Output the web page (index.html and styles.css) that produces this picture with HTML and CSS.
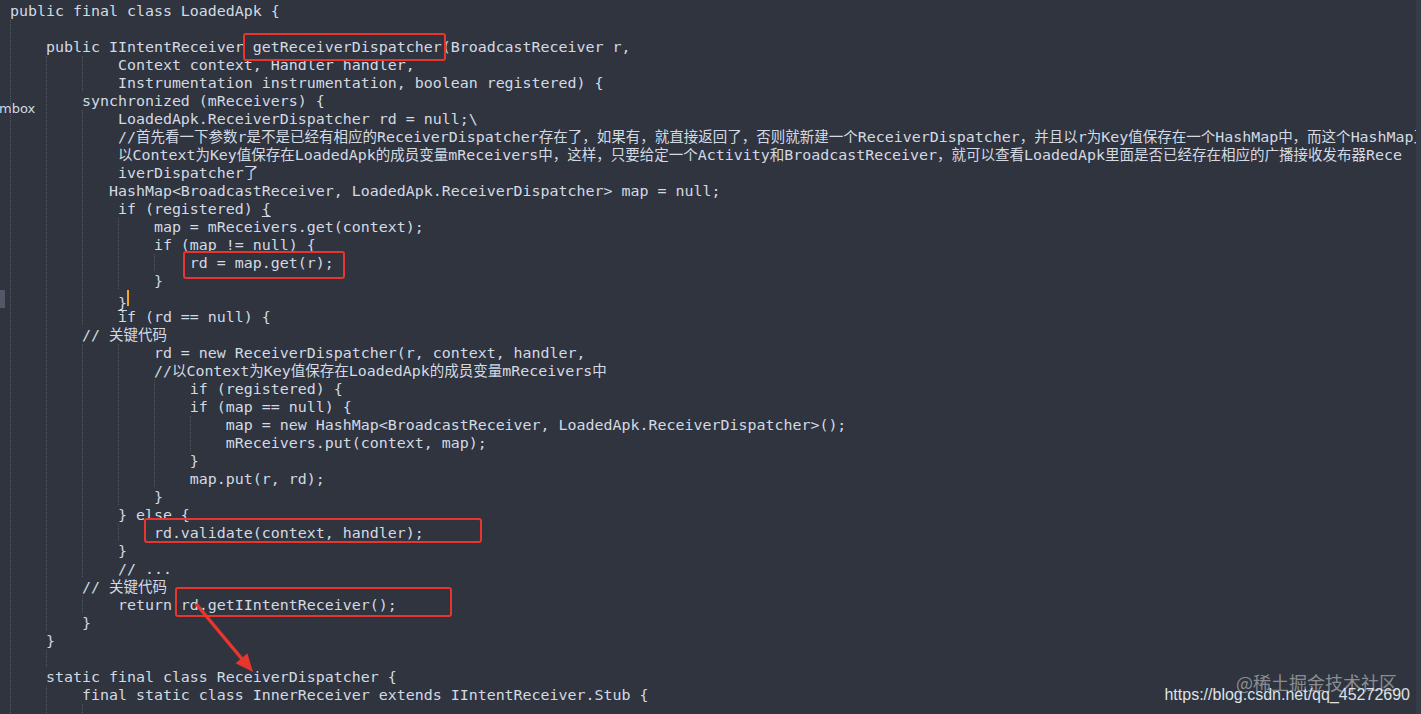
FILE: index.html
```html
<!DOCTYPE html>
<html lang="zh-CN">
<head>
<meta charset="utf-8">
<title>LoadedApk</title>
<link rel="stylesheet" href="styles.css">
</head>
<body>
<div class="editor">
  <div class="code">
<div class="l">public final class LoadedApk {</div>
<div class="l g1"></div>
<div class="l g1">    public IIntentReceiver getReceiverDispatcher(BroadcastReceiver r,</div>
<div class="l g3">            Context context, Handler handler,</div>
<div class="l g3">            Instrumentation instrumentation, boolean registered) {</div>
<div class="l g2">        synchronized (mReceivers) {</div>
<div class="l g3">            LoadedApk.ReceiverDispatcher rd = null;\</div>
<div class="l g3">            //<span class="zh">首先看一下参数</span>r<span class="zh">是不是已经有相应的</span>ReceiverDispatcher<span class="zh">存在了，如果有，就直接返回了，否则就新建一个</span>ReceiverDispatcher<span class="zh">，并且以</span>r<span class="zh">为</span>Key<span class="zh">值保存在一个</span>HashMap<span class="zh">中，而这个</span>HashMap<span class="zh">又</span></div>
<div class="l g3">            <span class="zh">以</span>Context<span class="zh">为</span>Key<span class="zh">值保存在</span>LoadedApk<span class="zh">的成员变量</span>mReceivers<span class="zh">中，这样，只要给定一个</span>Activity<span class="zh">和</span>BroadcastReceiver<span class="zh">，就可以查看</span>LoadedApk<span class="zh">里面是否已经存在相应的广播接收发布器</span>Rece</div>
<div class="l g3">            iverDispatcher<span class="zh">了</span></div>
<div class="l g3">           HashMap&lt;BroadcastReceiver, LoadedApk.ReceiverDispatcher&gt; map = null;</div>
<div class="l g3">            if (registered) <span class="match">{</span></div>
<div class="l g4">                map = mReceivers.get(context);</div>
<div class="l g4">                if (map != null) {</div>
<div class="l g5">                    rd = map.get(r);</div>
<div class="l g4">                }</div>
<div class="l g3">            <span class="match">}</span><span class="caret"></span></div>
<div class="l g3">            if (rd == null) {</div>
<div class="l g2">        // <span class="zh">关键代码</span></div>
<div class="l g4">                rd = new ReceiverDispatcher(r, context, handler,</div>
<div class="l g4">                //<span class="zh">以</span>Context<span class="zh">为</span>Key<span class="zh">值保存在</span>LoadedApk<span class="zh">的成员变量</span>mReceivers<span class="zh">中</span></div>
<div class="l g5">                    if (registered) {</div>
<div class="l g5">                    if (map == null) {</div>
<div class="l g6">                        map = new HashMap&lt;BroadcastReceiver, LoadedApk.ReceiverDispatcher&gt;();</div>
<div class="l g6">                        mReceivers.put(context, map);</div>
<div class="l g5">                    }</div>
<div class="l g5">                    map.put(r, rd);</div>
<div class="l g4">                }</div>
<div class="l g3">            } else {</div>
<div class="l g4">                rd.validate(context, handler);</div>
<div class="l g3">            }</div>
<div class="l g3">            // ...</div>
<div class="l g2">        // <span class="zh">关键代码</span></div>
<div class="l g3">            return rd.getIIntentReceiver();</div>
<div class="l g2">        }</div>
<div class="l g1">    }</div>
<div class="l g2"></div>
<div class="l g1">    static final class ReceiverDispatcher {</div>
<div class="l g2">        final static class InnerReceiver extends IIntentReceiver.Stub {</div>
<div class="l g3"></div>
  </div>
  <div class="scroll"></div>
</div>

<div class="panel-label">mbox</div>
<div class="gutter-mark"></div>

<div class="box b1"></div>
<div class="box b2"></div>
<div class="box b3"></div>
<div class="box b4"></div>

<svg class="arrow" width="80" height="82" viewBox="0 0 80 82">
  <line x1="7" y1="7" x2="52" y2="61" stroke="#e8352e" stroke-width="3.5" stroke-linecap="round"/>
  <polygon points="63,74 45.6,65.2 57.4,55.3" fill="#e8352e"/>
</svg>

<div class="wm-juejin">@稀土掘金技术社区</div>
<div class="wm-csdn">https://blog.csdn.net/qq_45272690</div>
</body>
</html>
```

FILE: styles.css
```css
* { box-sizing: border-box; }

html, body {
  margin: 0;
  background: #2f343f;
}

body {
  position: relative;
  width: 1421px;
  height: 714px;
  overflow: hidden;
}

.editor {
  display: flex;
  height: 714px;
}

.code {
  flex: 1;
  min-width: 0;
  overflow: hidden;
  padding: 2px 0 0 10px;
  font-family: "DejaVu Sans Mono", monospace;
  font-size: 14.95px;
  line-height: 18px;
  color: #d3dae3;
}

.scroll {
  width: 5px;
  background: #363b46;
}

.l {
  height: 18px;
  white-space: pre;
  background-repeat: repeat-y;
  background-size: 1px 2px;
  --dot: linear-gradient(rgba(211, 218, 227, 0.22) 50%, transparent 50%);
}

.g1 { background-image: var(--dot); background-position: 0 0; }
.g2 { background-image: var(--dot), var(--dot); background-position: 0 0, 36px 0; }
.g3 { background-image: var(--dot), var(--dot), var(--dot); background-position: 0 0, 36px 0, 72px 0; }
.g4 { background-image: var(--dot), var(--dot), var(--dot), var(--dot); background-position: 0 0, 36px 0, 72px 0, 108px 0; }
.g5 { background-image: var(--dot), var(--dot), var(--dot), var(--dot), var(--dot); background-position: 0 0, 36px 0, 72px 0, 108px 0, 144px 0; }
.g6 { background-image: var(--dot), var(--dot), var(--dot), var(--dot), var(--dot), var(--dot); background-position: 0 0, 36px 0, 72px 0, 108px 0, 144px 0, 180px 0; }

.zh {
  font-family: "Noto Sans CJK SC", sans-serif;
  font-size: 14.5px;
  line-height: 1;
}

.match {
  text-decoration: underline;
  text-underline-offset: 2px;
}

.caret {
  display: inline-block;
  width: 2px;
  height: 16px;
  background: #f4a62a;
  vertical-align: 2px;
}

.panel-label {
  position: absolute;
  left: -1px;
  top: 100px;
  font-family: "DejaVu Sans", sans-serif;
  font-size: 13px;
  line-height: 18px;
  color: #d3dae3;
}

.gutter-mark {
  position: absolute;
  left: 0;
  top: 290px;
  width: 5px;
  height: 18px;
  background: #525866;
}

.box {
  position: absolute;
  border: 2px solid #e8352e;
  border-radius: 3px;
}
.b1 { left: 243px; top: 33px; width: 203px; height: 28px; }
.b2 { left: 183px; top: 251px; width: 162px; height: 28px; }
.b3 { left: 144px; top: 518px; width: 338px; height: 25px; }
.b4 { left: 175px; top: 587px; width: 277px; height: 30px; }

.arrow {
  position: absolute;
  left: 190px;
  top: 598px;
}

.wm-juejin {
  position: absolute;
  right: 24px;
  top: 673px;
  font-family: "Noto Sans CJK SC", sans-serif;
  font-size: 18px;
  line-height: 18px;
  color: rgba(255, 255, 255, 0.45);
}

.wm-csdn {
  position: absolute;
  right: 11px;
  top: 687px;
  font-family: "Liberation Sans", Arial, sans-serif;
  font-size: 16px;
  line-height: 16px;
  color: #dfe2e6;
}
```
